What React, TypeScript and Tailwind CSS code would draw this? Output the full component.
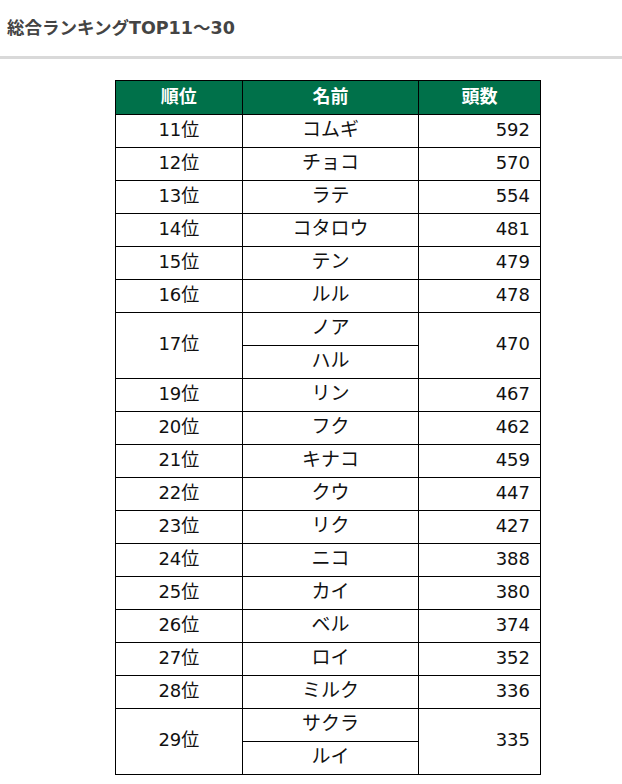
const rows: { rank: string; names: string[]; count: number }[] = [
  { rank: '11位', names: ['コムギ'], count: 592 },
  { rank: '12位', names: ['チョコ'], count: 570 },
  { rank: '13位', names: ['ラテ'], count: 554 },
  { rank: '14位', names: ['コタロウ'], count: 481 },
  { rank: '15位', names: ['テン'], count: 479 },
  { rank: '16位', names: ['ルル'], count: 478 },
  { rank: '17位', names: ['ノア', 'ハル'], count: 470 },
  { rank: '19位', names: ['リン'], count: 467 },
  { rank: '20位', names: ['フク'], count: 462 },
  { rank: '21位', names: ['キナコ'], count: 459 },
  { rank: '22位', names: ['クウ'], count: 447 },
  { rank: '23位', names: ['リク'], count: 427 },
  { rank: '24位', names: ['ニコ'], count: 388 },
  { rank: '25位', names: ['カイ'], count: 380 },
  { rank: '26位', names: ['ベル'], count: 374 },
  { rank: '27位', names: ['ロイ'], count: 352 },
  { rank: '28位', names: ['ミルク'], count: 336 },
  { rank: '29位', names: ['サクラ', 'ルイ'], count: 335 },
];

const cell = 'border border-black h-[33px] p-0 pb-[3px] leading-none';

export default function App() {
  return (
    <div className="min-h-screen bg-white font-['DejaVu_Sans','Noto_Sans_CJK_JP',sans-serif] text-[#111]">
      <h2 className="px-[7px] pt-[16px] pb-[16px] text-[17.5px] font-bold leading-[24px] text-[#444]">
        総合ランキングTOP11～30
      </h2>
      <div className="h-[3px] bg-[#d9d9d9]" />

      <table className="mt-[21px] ml-[115px] w-[426px] border-collapse text-[18px]">
        <colgroup>
          <col className="w-[127px]" />
          <col className="w-[177px]" />
          <col className="w-[122px]" />
        </colgroup>
        <thead>
          <tr className="bg-[#00714a] text-white">
            <th className="border border-black h-[34px] p-0 pb-[3px] font-bold">順位</th>
            <th className="border border-black h-[34px] p-0 pb-[3px] font-bold">名前</th>
            <th className="border border-black h-[34px] p-0 pb-[3px] font-bold">頭数</th>
          </tr>
        </thead>
        <tbody>
          {rows.map((r) =>
            r.names.map((n, i) => (
              <tr key={r.rank + n}>
                {i === 0 && (
                  <td rowSpan={r.names.length} className={`${cell} text-center`}>
                    {r.rank}
                  </td>
                )}
                <td className={`${cell} text-center text-[19px]`}>{n}</td>
                {i === 0 && (
                  <td rowSpan={r.names.length} className={`${cell} pr-[10px] text-right`}>
                    {r.count}
                  </td>
                )}
              </tr>
            ))
          )}
        </tbody>
      </table>
    </div>
  );
}
